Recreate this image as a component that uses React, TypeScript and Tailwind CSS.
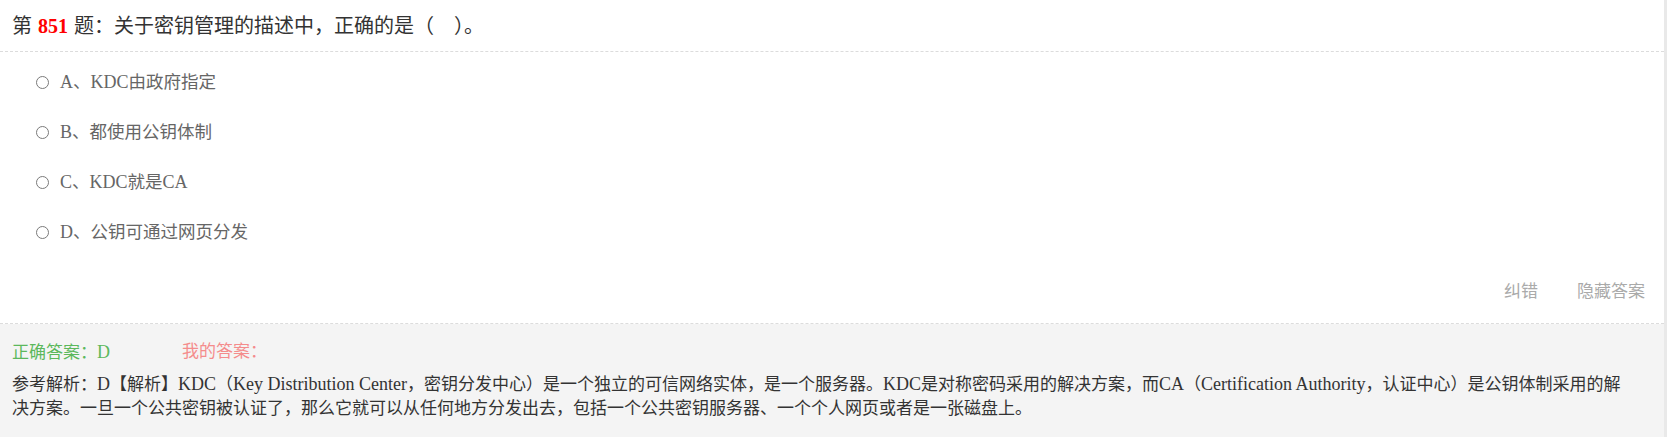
const options = [
  { key: "A", text: "KDC由政府指定" },
  { key: "B", text: "都使用公钥体制" },
  { key: "C", text: "KDC就是CA" },
  { key: "D", text: "公钥可通过网页分发" },
];

// latin runs render a touch larger than the CJK text around them
function Mixed({ text }: { text: string }) {
  const parts = text.split(/([\x20-\x7e]+)/);
  return (
    <>
      {parts.map((p, i) =>
        i % 2 === 1 ? (
          <span key={i} className="text-[18px]">
            {p}
          </span>
        ) : (
          p
        )
      )}
    </>
  );
}

function Radio() {
  return <span className="inline-block h-[13px] w-[13px] shrink-0 rounded-full border border-[#7a7a7a] bg-white" />;
}

export default function App() {
  return (
    <div className="flex min-h-screen bg-white font-['Liberation_Serif','Noto_Sans_CJK_SC',serif]">
      <div className="flex flex-1 flex-col">
        <div className="flex h-[52px] items-center border-b border-dashed border-[#dcdcdc] px-3 text-[20px] text-[#333]">
          第 <span className="mx-[6px] font-bold text-[#ff0000]">851</span> 题：关于密钥管理的描述中，正确的是（
          <span className="inline-block w-[20px]" />）。
        </div>

        <div className="pt-[5px]">
          {options.map((o) => (
            <div key={o.key} className="flex h-[50px] items-center gap-[11px] pl-9 text-[17.5px] text-[#666]">
              <Radio />
              <span>
                <Mixed text={o.key} />、<Mixed text={o.text} />
              </span>
            </div>
          ))}
        </div>

        <div className="flex h-[67px] items-center justify-end gap-[39px] border-b border-dashed border-[#dcdcdc] pr-[19px] pt-[3px] text-[17px] text-[#aaa]">
          <span>纠错</span>
          <span>隐藏答案</span>
        </div>

        <div className="flex-1 bg-[#f4f4f4] px-3 pt-[18px]">
          <div className="flex text-[17px] leading-[20px]">
            <span className="w-[170px] text-[#5cb85c]">
              正确答案：<Mixed text="D" />
            </span>
            <span className="text-[#f48c8c]">我的答案：</span>
          </div>
          <p className="mt-[9px] text-[17px] leading-[24px] text-[#333]">
            <Mixed text="参考解析：D【解析】KDC（Key Distribution Center，密钥分发中心）是一个独立的可信网络实体，是一个服务器。KDC是对称密码采用的解决方案，而CA（Certification Authority，认证中心）是公钥体制采用的解" />
            <br />
            决方案。一旦一个公共密钥被认证了，那么它就可以从任何地方分发出去，包括一个公共密钥服务器、一个个人网页或者是一张磁盘上。
          </p>
        </div>
      </div>
      <div className="w-[3px] bg-[#e9e9e9]" />
    </div>
  );
}
